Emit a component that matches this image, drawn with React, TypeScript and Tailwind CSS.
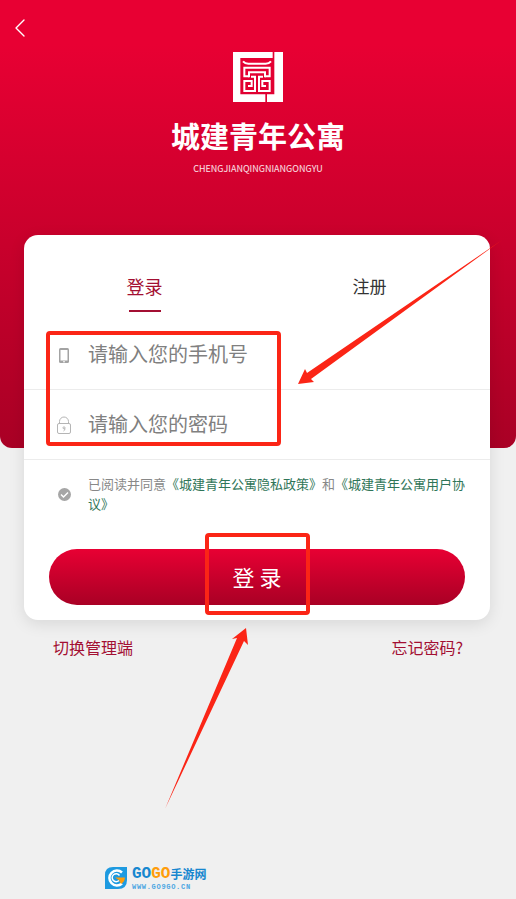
import React from "react"
import { ChevronLeft } from "lucide-react"

const ANNOTATION = "pointer-events-none absolute rounded-[4px] border-4 border-[#fb2516]"

function SealLogo() {
  return (
    <svg viewBox="0 0 150 150" className="h-[50px] w-[50px]" fill="none" stroke="#fff" strokeWidth="6" aria-hidden="true">
      <path d="M0 0H119V18H22V127H97V150H0Z" fill="#fff" stroke="none" />
      <path d="M124 0H150V150H102V127H124Z" fill="#fff" stroke="none" />
      <path d="M30 28Q36 35 46 35H98Q108 35 114 28" />
      <path d="M48 73H34V47H110V73H96" />
      <path d="M48 76V61H96V76" />
      <path d="M54 74H66V117M90 74H78V117" />
      <path d="M69 117H34V87H56V102H45M75 117H110V87H88V102H99" />
    </svg>
  )
}

function PhoneIcon() {
  return (
    <svg viewBox="0 0 16 20" className="h-5 w-4 shrink-0" aria-hidden="true">
      <rect x="3" y="3" width="10" height="15" rx="1.5" fill="#a3a3a3" />
      <rect x="4.5" y="5" width="7" height="10.5" fill="#fff" />
      <path d="M7 16.8h2" stroke="#fff" />
    </svg>
  )
}

function LockIcon() {
  return (
    <svg viewBox="0 0 16 20" className="h-5 w-4 shrink-0" fill="none" stroke="#b5b5b5" aria-hidden="true">
      <rect x="1.5" y="8.5" width="13" height="10" rx="1.5" />
      <path d="M3.5 8.5V6.5a4.5 4.5 0 0 1 9 0v2M9 13.5q0 2-1.5 2.5" />
      <circle cx="8" cy="12.8" r="1" />
    </svg>
  )
}

interface FieldProps {
  id: string
  type: string
  label: string
  icon: React.ReactNode
}

function Field({ id, type, label, icon }: FieldProps) {
  return (
    <div className="flex h-[70px] items-center gap-4 border-b border-[#ececec] pl-8 pr-6">
      <label htmlFor={id} aria-label={label}>
        {icon}
      </label>
      <input
        id={id}
        type={type}
        placeholder={label}
        className="h-10 min-w-0 flex-1 bg-transparent pb-0.5 text-[20px] text-[#333] outline-none placeholder:text-[#808080]"
      />
    </div>
  )
}

function SiteMark() {
  return (
    <div className="flex items-center gap-1">
      <svg viewBox="0 0 24 24" className="h-6 w-6" fill="none" aria-hidden="true">
        <path d="M9 1H23V14Q23 23 14 23H1V9Q1 1 9 1Z" fill="#1e9ae0" />
        <path d="M18 6.5A7.5 7.5 0 1 0 18 17.5" stroke="#fff" strokeWidth="2.5" />
        <path d="M15.5 9.5A4 4 0 1 0 15 14.5" stroke="#fff" strokeWidth="1.5" />
        <path d="M11 11.5H21Q20.5 16 17 18L15 14Z" fill="#ff9d0a" />
      </svg>
      <div className="flex flex-col">
        <div className="flex items-center leading-[18px] font-bold">
          <span className="font-['Liberation_Mono',monospace] text-[16px] text-[#1787cf]">GO</span>
          <span className="font-['Liberation_Mono',monospace] text-[16px] text-[#ff9d0a]">GO</span>
          <span className="text-[12px] text-[#1787cf]">手游网</span>
        </div>
        <span className="font-['Liberation_Mono',monospace] text-[7px] leading-[8px] font-bold tracking-widest text-[#4ba6e2]">
          WWW.GO9GO.CN
        </span>
      </div>
    </div>
  )
}

export default function App() {
  return (
    <div className="grid min-h-screen bg-[#f0f0f0] font-['Noto_Sans_CJK_SC',sans-serif]">
      <div className="col-start-1 row-start-1 h-[448px] rounded-b-[12px] bg-linear-to-b from-[#e80033] from-10% to-[#a90025]" />

      <div className="z-10 col-start-1 row-start-1 flex flex-col">
        <header className="flex flex-col">
          <button type="button" aria-label="返回" className="ml-1 mt-3 flex h-8 w-8 items-center justify-center text-white">
            <ChevronLeft className="h-8 w-8" strokeWidth={1} />
          </button>
          <div className="mt-2 flex flex-col items-center">
            <SealLogo />
            <h1 className="mt-[11px] text-[29px] leading-[44px] font-bold text-white">城建青年公寓</h1>
            <p className="mt-[5px] text-[9px] leading-[14px] text-white/90">CHENGJIANQINGNIANGONGYU</p>
          </div>
        </header>

        <main className="relative ml-6 mr-[26px] mt-[59px] rounded-[14px] bg-white pb-[15px] shadow-[0_4px_16px_rgba(0,0,0,0.1)]">
          <div role="tablist" className="grid h-[85px] grid-cols-2 px-2 pt-[38px] text-[18px] leading-[26px]">
            <button type="button" role="tab" aria-selected="true" className="flex flex-col items-center gap-[11px] text-[#a30f32]">
              登录
              <span className="h-[2px] w-8 bg-[#a30f32]" />
            </button>
            <button type="button" role="tab" aria-selected="false" className="flex flex-col items-center text-[17px] text-[#333]">
              注册
            </button>
          </div>

          <form>
            <div className="relative">
              <Field id="phone" type="tel" label="请输入您的手机号" icon={<PhoneIcon />} />
              <Field id="password" type="password" label="请输入您的密码" icon={<LockIcon />} />
              <div className={`${ANNOTATION} left-[22px] top-[11px] h-[115px] w-[235px]`} />
            </div>

            <div className="flex items-center gap-4 pl-8 pr-6 pt-[14px]">
              <span className="grid w-4 place-items-center">
                <input
                  id="agree"
                  type="checkbox"
                  className="col-start-1 row-start-1 h-[13px] w-[13px] appearance-none rounded-full bg-[#a6a6a6]"
                />
                <svg viewBox="0 0 13 13" className="pointer-events-none col-start-1 row-start-1 h-[13px] w-[13px]" fill="none" stroke="#fff" strokeWidth="1.5" aria-hidden="true">
                  <path d="M3 6.5L5.5 9L10 4.5" />
                </svg>
              </span>
              <label htmlFor="agree" className="flex-1 text-[13px] leading-5 text-[#888]">
                已阅读并同意
                <a href="#privacy" className="text-[#2f7558]">《城建青年公寓隐私政策》</a>
                和
                <a href="#terms" className="text-[#2f7558]">《城建青年公寓用户协议》</a>
              </label>
            </div>

            <div className="relative mx-[25px] mt-[35px]">
              <button type="button" className="h-14 w-full rounded-full bg-linear-to-b from-[#e80033] to-[#a90025] pb-0.5 text-[22px] text-white">
                登 录
              </button>
              <div className={`${ANNOTATION} inset-x-0 -top-4 mx-auto h-[82px] w-[105px]`} />
            </div>
          </form>

          <svg viewBox="0 0 204 144" className="pointer-events-none absolute -right-3 top-[5px] h-[144px] w-[204px]" fill="#fb2516" aria-hidden="true">
            <path d="M204 0L9 133L7 129L0 144L16 142L13 139Z" />
          </svg>
        </main>

        <nav className="relative flex justify-between pl-[53px] pr-[53px] pt-[15px] text-[16px] leading-6 text-[#a30f32]">
          <a href="#admin">切换管理端</a>
          <a href="#forgot">忘记密码?</a>
          <svg viewBox="0 0 83 182" className="pointer-events-none absolute left-[165px] top-[8px] h-[182px] w-[83px]" fill="#fb2516" aria-hidden="true">
            <path d="M0 181L72 10L67 11L81 0L83 17L79 13Z" />
          </svg>
        </nav>

        <footer className="mt-auto pb-2 pl-[104px]">
          <SiteMark />
        </footer>
      </div>
    </div>
  )
}
